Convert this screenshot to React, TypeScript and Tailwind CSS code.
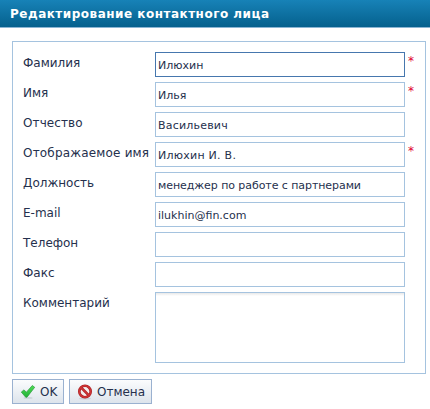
type Field = {
  name: string;
  label: string;
  value: string;
  required?: boolean;
  active?: boolean;
  labelSpacing?: string;
  valueSpacing?: string;
};

const fields: Field[] = [
  { name: "surname", label: "Фамилия", value: "Илюхин", required: true, active: true },
  { name: "name", label: "Имя", value: "Илья", required: true },
  { name: "patronymic", label: "Отчество", value: "Васильевич", labelSpacing: "tracking-[0.1px]", valueSpacing: "tracking-[0.2px]" },
  { name: "display", label: "Отображаемое имя", value: "Илюхин И. В.", required: true, labelSpacing: "tracking-[0.18px]", valueSpacing: "tracking-[0.25px]" },
  { name: "position", label: "Должность", value: "менеджер по работе с партнерами", valueSpacing: "tracking-[-0.07px]" },
  { name: "email", label: "E-mail", value: "ilukhin@fin.com" },
  { name: "phone", label: "Телефон", value: "" },
  { name: "fax", label: "Факс", value: "" },
];

function CheckIcon() {
  return (
    <svg width="16" height="16" viewBox="0 0 16 16" className="shrink-0">
      <defs>
        <linearGradient id="check" x1="0" y1="0" x2="0" y2="1">
          <stop offset="0" stopColor="#4fdc55" />
          <stop offset="1" stopColor="#22b338" />
        </linearGradient>
      </defs>
      <ellipse cx="8" cy="13.9" rx="4.5" ry="0.9" fill="#b9c4c8" opacity="0.6" />
      <path d="M1.3 8.1 3.9 5.9 6.4 8.2 12.3 1.5 14.7 3.3 7 13.2 5.7 13.2Z" fill="url(#check)" stroke="#2a9a3c" strokeWidth="0.7" strokeLinejoin="round" />
    </svg>
  );
}

function CancelIcon() {
  return (
    <svg width="16" height="16" viewBox="0 0 16 16" className="shrink-0">
      <ellipse cx="8" cy="14.6" rx="6" ry="1" fill="#b9c0c8" opacity="0.6" />
      <circle cx="8" cy="7.5" r="5.7" fill="#f3eeee" stroke="#a91f22" strokeWidth="2.6" />
      <path d="M4.2 3.7 11.8 11.3" stroke="#a91f22" strokeWidth="2.6" />
      <circle cx="8" cy="7.5" r="5.7" fill="none" stroke="#cf3536" strokeWidth="1.4" />
      <path d="M4.2 3.7 11.8 11.3" stroke="#cf3536" strokeWidth="1.4" />
    </svg>
  );
}

const buttonClass =
  "flex h-[25px] items-center border border-[#9ab1d0] bg-linear-to-b from-[#fbfcfd] to-[#dde4ec] text-[12px] leading-4 text-[#25304d]";

export default function App() {
  return (
    <div className="h-[409px] w-[430px] overflow-hidden bg-white font-['DejaVu_Sans',sans-serif] text-[#25304d]">
      <header className="h-7 border-b border-[#8ab5d3] bg-linear-to-b from-[#1782b7] to-[#05618e] pl-[10px]">
        <h1 className="whitespace-nowrap pt-[6px] text-[12px] leading-4 font-bold tracking-[0.5px] text-white">Редактирование контактного лица</h1>
      </header>
      <form className="px-3 pt-[13px]">
        <div className="flex h-[333px] w-[414px] flex-col gap-[5px] border border-[#a5c3df] pt-[10px] pl-[10px]">
          {fields.map((f) => (
            <div key={f.name} className="flex h-[25px]">
              <label
                htmlFor={f.name}
                className={`w-[132px] shrink-0 whitespace-nowrap pt-[3px] text-[12px] leading-4 ${f.labelSpacing ?? ""}`}
              >
                {f.label}
              </label>
              <input
                id={f.name}
                defaultValue={f.value}
                className={`h-[25px] w-[250px] shrink-0 border bg-white px-[2px] pt-[2px] text-[11px] outline-none ${f.valueSpacing ?? ""} ${f.active ? "border-[#4677ae]" : "border-[#a5c3df]"}`}
              />
              {f.required && <span className="pt-px pl-[3px] text-[12px] leading-4 text-[#e00030]">*</span>}
            </div>
          ))}
          <div className="flex">
            <label htmlFor="comment" className="w-[132px] shrink-0 pt-[3px] text-[12px] leading-4">
              Комментарий
            </label>
            <textarea
              id="comment"
              className="h-[71px] w-[250px] resize-none border border-[#a5c3df] bg-linear-to-b from-[#e8e8e8] to-white to-[3px] outline-none"
            />
          </div>
        </div>
        <div className="mt-[5px] flex gap-[5px]">
          <button type="button" className={`${buttonClass} w-[52px] pl-[7px] gap-1`}>
            <CheckIcon />
            <span className="pt-px">OK</span>
          </button>
          <button type="button" className={`${buttonClass} w-[83px] pl-[7px] gap-1`}>
            <CancelIcon />
            <span className="pt-px">Отмена</span>
          </button>
        </div>
      </form>
    </div>
  );
}
